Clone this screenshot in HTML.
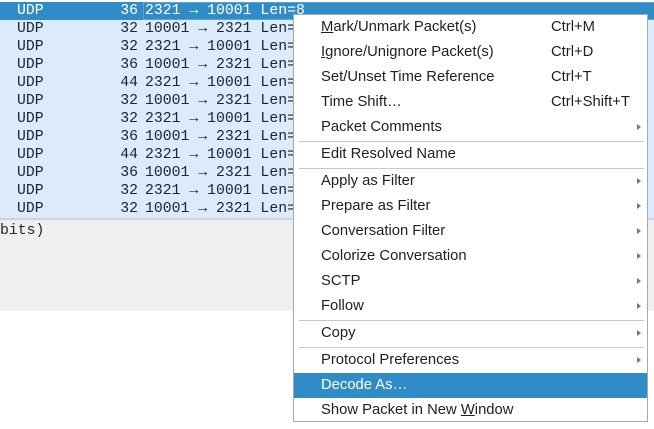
<!DOCTYPE html>
<html><head><style>
*{margin:0;padding:0;box-sizing:border-box}
body{width:654px;height:429px;background:#fff;position:relative;overflow:hidden;font-family:"Liberation Sans",sans-serif}
.list{position:absolute;left:0;top:2px;width:654px}
.row{height:18px;background:#dcebfb;position:relative;font-family:"Liberation Mono",monospace;font-size:14.8px;color:#1c2433;line-height:18px;white-space:pre}
.row.sel{background:#308cc6;color:#fff}
.row span{position:absolute;top:0}
.p{left:17px}.n{left:104px;width:34px;text-align:right}.i{left:145px}
.focus{position:absolute;left:143px;top:0;width:520px;height:18px;border:1px solid #5aa4d6}
.panel{position:absolute;left:0;top:218px;width:654px;height:93px;background:#efefef;border-top:2px solid #d2d2d2}
.panel div{font-family:"Liberation Mono",monospace;font-size:14.8px;color:#1c2433;position:absolute;left:0;top:3px}
.menu{position:absolute;left:293px;top:14px;width:355px;height:408px;background:#fff;border:1px solid #a8a8a8}
.it{position:absolute;left:0;width:353px;height:25px;font-size:14.8px;color:#1f1f1f;line-height:25px}
.it .t{position:absolute;left:27px}
.it .s{position:absolute;left:257px}
.it .a{position:absolute;left:343px;top:9px;width:0;height:0;border-left:4px solid #777;border-top:3.5px solid transparent;border-bottom:3.5px solid transparent}
.it.hl{background:#308cc6;color:#fff}
.sep{position:absolute;left:5px;width:345px;height:1px;background:#c8c8c8}
u{text-decoration:underline}
</style></head><body>
<div class="list">
<div class="row sel"><span class="p">UDP</span><span class="n">36</span><span class="i">2321 → 10001 Len=8</span><div class="focus"></div></div>
<div class="row"><span class="p">UDP</span><span class="n">32</span><span class="i">10001 → 2321 Len=</span></div>
<div class="row"><span class="p">UDP</span><span class="n">32</span><span class="i">2321 → 10001 Len=</span></div>
<div class="row"><span class="p">UDP</span><span class="n">36</span><span class="i">10001 → 2321 Len=</span></div>
<div class="row"><span class="p">UDP</span><span class="n">44</span><span class="i">2321 → 10001 Len=</span></div>
<div class="row"><span class="p">UDP</span><span class="n">32</span><span class="i">10001 → 2321 Len=</span></div>
<div class="row"><span class="p">UDP</span><span class="n">32</span><span class="i">2321 → 10001 Len=</span></div>
<div class="row"><span class="p">UDP</span><span class="n">36</span><span class="i">10001 → 2321 Len=</span></div>
<div class="row"><span class="p">UDP</span><span class="n">44</span><span class="i">2321 → 10001 Len=</span></div>
<div class="row"><span class="p">UDP</span><span class="n">36</span><span class="i">10001 → 2321 Len=</span></div>
<div class="row"><span class="p">UDP</span><span class="n">32</span><span class="i">2321 → 10001 Len=</span></div>
<div class="row"><span class="p">UDP</span><span class="n">32</span><span class="i">10001 → 2321 Len=</span></div>
</div>
<div class="panel"><div>bits)</div></div>
<div class="menu">
<div class="it" style="top:0"><span class="t"><u>M</u>ark/Unmark Packet(s)</span><span class="s">Ctrl+M</span></div>
<div class="it" style="top:25px"><span class="t"><u>I</u>gnore/Unignore Packet(s)</span><span class="s">Ctrl+D</span></div>
<div class="it" style="top:50px"><span class="t">Set/Unset Time Reference</span><span class="s">Ctrl+T</span></div>
<div class="it" style="top:75px"><span class="t">Time Shift…</span><span class="s">Ctrl+Shift+T</span></div>
<div class="it" style="top:100px"><span class="t">Packet Comments</span><i class="a"></i></div>
<div class="sep" style="top:126px"></div>
<div class="it" style="top:127px"><span class="t">Edit Resolved Name</span></div>
<div class="sep" style="top:153px"></div>
<div class="it" style="top:154px"><span class="t">Apply as Filter</span><i class="a"></i></div>
<div class="it" style="top:179px"><span class="t">Prepare as Filter</span><i class="a"></i></div>
<div class="it" style="top:204px"><span class="t">Conversation Filter</span><i class="a"></i></div>
<div class="it" style="top:229px"><span class="t">Colorize Conversation</span><i class="a"></i></div>
<div class="it" style="top:254px"><span class="t">SCTP</span><i class="a"></i></div>
<div class="it" style="top:279px"><span class="t">Follow</span><i class="a"></i></div>
<div class="sep" style="top:305px"></div>
<div class="it" style="top:306px"><span class="t">Copy</span><i class="a"></i></div>
<div class="sep" style="top:332px"></div>
<div class="it" style="top:333px"><span class="t">Protocol Preferences</span><i class="a"></i></div>
<div class="it hl" style="top:358px"><span class="t">Decode As…</span></div>
<div class="it" style="top:383px"><span class="t">Show Packet in New <u>W</u>indow</span></div>
</div>
</body></html>
